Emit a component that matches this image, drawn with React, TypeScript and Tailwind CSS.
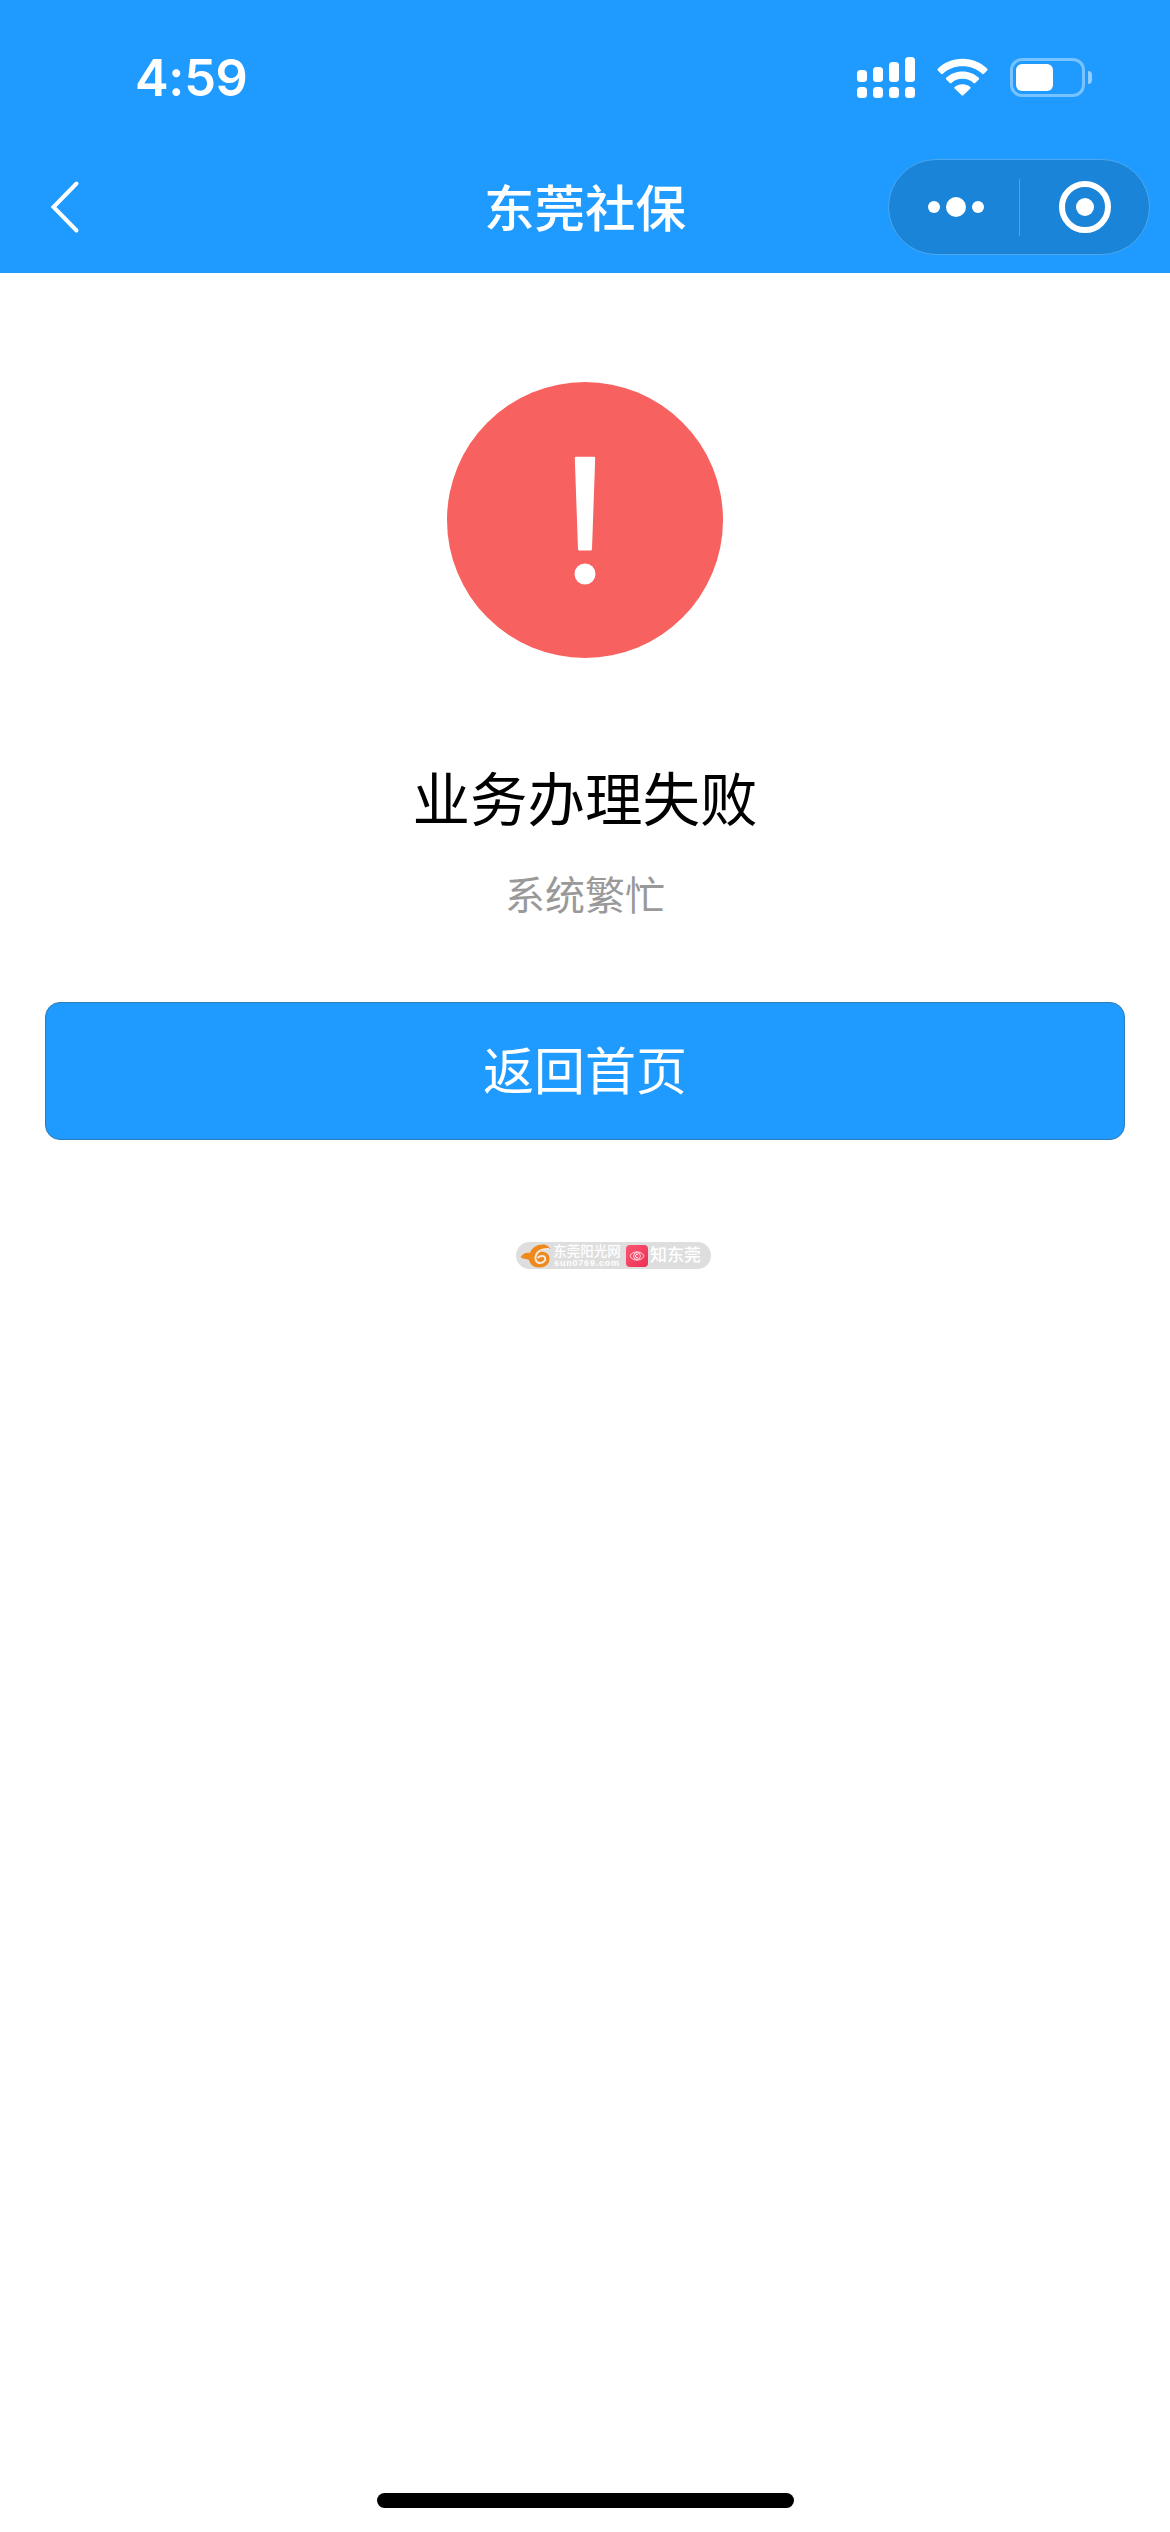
import { clsx } from "clsx";

const signalBars = ["h-[12px]", "h-[15px]", "h-[20px]", "h-[25px]"];

function SignalIcon() {
  return (
    <div className="flex h-[41px] items-end gap-[6px]">
      {signalBars.map((height) => (
        <div key={height} className="flex flex-col gap-[5px]">
          <div className={clsx("w-[10px] rounded-[3.5px] bg-white", height)} />
          <div className="h-[11px] w-[10px] rounded-[3.5px] bg-white" />
        </div>
      ))}
    </div>
  );
}

function WifiIcon() {
  return (
    <svg width="51" height="38" viewBox="0 0 51 38" fill="white">
      <path d="M25.5 0.8C35.2 0.8 44 4.6 50.2 10.8Q51 11.7 50.2 12.5L46.9 15.8Q46 16.6 45.1 15.8C40 10.9 33.1 8.3 25.5 8.3C17.9 8.3 11 10.9 5.9 15.8Q5 16.6 4.1 15.8L0.8 12.5Q0 11.7 0.8 10.8C7 4.6 15.8 0.8 25.5 0.8Z" />
      <path d="M25.5 13.5C32 13.5 37.6 15.8 41.8 19.8Q42.6 20.6 41.8 21.4L38.2 24.9Q37.4 25.7 36.5 24.9C33.5 22.3 29.8 20.8 25.5 20.8C21.2 20.8 17.5 22.3 14.5 24.9Q13.6 25.7 12.8 24.9L9.2 21.4Q8.4 20.6 9.2 19.8C13.4 15.8 19 13.5 25.5 13.5Z" />
      <path d="M25.5 26.2C28.6 26.2 31.2 27.2 33.3 28.9Q34 29.6 33.3 30.4L26.3 37.3Q25.5 38 24.7 37.3L17.7 30.4Q17 29.6 17.7 28.9C19.8 27.2 22.4 26.2 25.5 26.2Z" />
    </svg>
  );
}

function BatteryIcon() {
  return (
    <div className="flex items-center gap-[3px]">
      <div className="h-[39px] w-[75px] rounded-[12px] border-[3px] border-white/40 p-[3px]">
        <div className="h-[27px] w-[37px] rounded-[6px] bg-white" />
      </div>
      <div className="h-[13px] w-[4px] rounded-r-full bg-white/50" />
    </div>
  );
}

function StatusBar() {
  return (
    <div className="flex h-[144px] items-start justify-between pr-[78px] pl-[135px]">
      <div className="mt-[48px] font-['Inter',sans-serif] text-[50.5px] leading-[60px] font-semibold tracking-[-0.3px]">
        4:59
      </div>
      <div className="mt-[57px] flex items-start">
        <SignalIcon />
        <div className="mt-px ml-[22px]">
          <WifiIcon />
        </div>
        <div className="mt-px ml-[22px]">
          <BatteryIcon />
        </div>
      </div>
    </div>
  );
}

function NavBar() {
  return (
    <div className="grid h-[126px] grid-cols-[1fr_auto_1fr] items-center">
      <svg className="ml-[48px]" width="36" height="54" viewBox="0 0 36 54" fill="none">
        <path d="M28.5 3.5L5.5 27L28.5 50.5" stroke="white" strokeWidth="4" strokeLinecap="round" />
      </svg>
      <h1 className="pt-[5px] text-[50.5px] leading-[60px] font-medium">东莞社保</h1>
      <div className="mr-[20px] flex h-[96px] w-[262px] items-center justify-self-end rounded-full border border-[#4da8ee] bg-[#1a84d9]">
        <div className="flex w-[130px] items-center justify-center gap-[6px] pl-[3px]">
          <span className="size-[12px] rounded-full bg-white" />
          <span className="size-[20px] rounded-full bg-white" />
          <span className="size-[12px] rounded-full bg-white" />
        </div>
        <div className="h-[57px] w-px bg-[#4ba4ea]" />
        <div className="flex flex-1 items-center justify-center">
          <div className="flex size-[52px] items-center justify-center rounded-full border-[6px] border-white">
            <span className="size-[18px] rounded-full bg-white" />
          </div>
        </div>
      </div>
    </div>
  );
}

function ErrorIcon() {
  return (
    <svg width="276" height="276" viewBox="0 0 276 276">
      <circle cx="138" cy="138" r="138" fill="#f76260" />
      <path
        d="M129 74.8H147Q148.300 74.8 148.200 76.300L145 167Q145 168.500 143.500 168.500H132.500Q131 168.500 131 167L127.800 76.300Q127.700 74.8 129 74.8Z"
        fill="white"
      />
      <circle cx="138" cy="192" r="10.5" fill="white" />
    </svg>
  );
}

function FooterLogo() {
  return (
    <div className="ml-[57px] flex h-[27px] w-[195px] items-center rounded-full bg-[#dedede] pl-[4px] text-white">
      <svg className="shrink-0" width="31" height="24" viewBox="0 0 31 24">
        <path
          d="M0.5 13C3 9 7 8 10 9C12 3 18 0 24 0.5C27 1 29 2.500 30 5C27 4.500 23 5.500 21 8C26 7.500 29.500 10 29.500 15C29.500 20 25 23.500 19 23.500C13.500 23.500 10 20.500 9 16C6 14.500 3 15.500 0.5 13Z"
          fill="#ee8a1d"
        />
        <path
          d="M29 5C23 4.500 18 7 16 11C14.500 15 16 19 20 19C24 19 26 16 25 13.500C24 11.500 20 11.500 17.500 14"
          fill="none"
          stroke="#f1e9df"
          strokeWidth="2"
        />
      </svg>
      <div className="ml-[2px] flex w-[68px] flex-col items-center">
        <span className="text-[13.5px] leading-[15px] font-medium whitespace-nowrap">东莞阳光网</span>
        <span className="font-['Liberation_Sans',sans-serif] text-[9px] leading-[8px] font-bold tracking-[0.8px]">
          sun0769.com
        </span>
      </div>
      <div className="ml-[5px] flex size-[22px] shrink-0 items-center justify-center rounded-[4px] bg-linear-to-br from-[#fb5572] to-[#ed2c55]">
        <svg width="16" height="14" viewBox="0 0 16 14" fill="none" stroke="white">
          <path d="M1 7C3.500 1.500 12.500 1.500 15 7C12.500 12.500 3.500 12.500 1 7Z" strokeOpacity="0.8" />
          <circle cx="8" cy="7" r="3.4" strokeOpacity="0.8" />
          <path d="M9.300 6A1.600 1.600 0 1 0 9.300 8" />
        </svg>
      </div>
      <span className="ml-[2px] text-[17px] leading-[20px] font-medium whitespace-nowrap">知东莞</span>
    </div>
  );
}

export default function App() {
  return (
    <div className="flex h-[2532px] w-[1170px] flex-col bg-white font-['Liberation_Sans','Noto_Sans_CJK_SC',sans-serif]">
      <header className="h-[273px] bg-[#1f9bff] text-white">
        <StatusBar />
        <NavBar />
      </header>
      <main className="flex flex-1 flex-col items-center px-[45px] pt-[109px]">
        <ErrorIcon />
        <h2 className="mt-[103px] text-[57.5px] leading-[80px] text-black">业务办理失败</h2>
        <p className="mt-[25px] text-[40px] leading-[60px] text-[#999999]">系统繁忙</p>
        <button className="mt-[76px] h-[138px] w-full rounded-[15px] border border-[#2d7db8] bg-[#1f9bff] pt-[4px] text-[51px] text-white">
          返回首页
        </button>
        <div className="mt-[102px] flex w-full justify-center">
          <FooterLogo />
        </div>
      </main>
      {/* 底部横条 */}
      <div className="mb-[24px] h-[15px] w-[417px] self-center rounded-full bg-black" />
    </div>
  );
}
